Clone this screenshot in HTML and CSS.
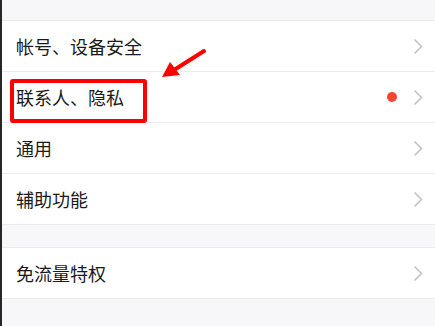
FILE: index.html
```html
<!DOCTYPE html>
<html lang="zh-CN">
<head>
    <meta charset="UTF-8">
    <meta name="viewport" content="width=device-width, initial-scale=1.0">
    <title>设置</title>
    <link rel="stylesheet" href="styles.css">
</head>
<body>
<div class="page">
    <div class="group first">
        <div class="row">
            <span class="label">帐号、设备安全</span>
            <svg class="chevron" width="10" height="17" viewBox="0 0 10 17"><polyline points="1.5,1.5 8.5,8.5 1.5,15.5"/></svg>
        </div>
        <div class="row">
            <span class="label">联系人、隐私</span>
            <span class="dot"></span>
            <svg class="chevron" width="10" height="17" viewBox="0 0 10 17"><polyline points="1.5,1.5 8.5,8.5 1.5,15.5"/></svg>
        </div>
        <div class="row">
            <span class="label">通用</span>
            <svg class="chevron" width="10" height="17" viewBox="0 0 10 17"><polyline points="1.5,1.5 8.5,8.5 1.5,15.5"/></svg>
        </div>
        <div class="row">
            <span class="label">辅助功能</span>
            <svg class="chevron" width="10" height="17" viewBox="0 0 10 17"><polyline points="1.5,1.5 8.5,8.5 1.5,15.5"/></svg>
        </div>
    </div>
    <div class="group">
        <div class="row">
            <span class="label">免流量特权</span>
            <svg class="chevron" width="10" height="17" viewBox="0 0 10 17"><polyline points="1.5,1.5 8.5,8.5 1.5,15.5"/></svg>
        </div>
    </div>

    <!-- 标注 -->
    <div class="mark-box"></div>
    <svg class="mark-arrow" width="50" height="34" viewBox="0 0 50 34">
        <line x1="46" y1="3" x2="16" y2="22" stroke="#f00" stroke-width="4" stroke-linecap="round"/>
        <polygon points="4,29 12,14 22,27" fill="#f00"/>
    </svg>
</div>
</body>
</html>
```

FILE: styles.css
```css
body {
    margin: 0;
    padding: 0;
    background-color: #f7f7f9;
    font-family: "Noto Sans CJK SC", "Noto Sans", sans-serif;
}
.page {
    position: relative;
    height: 326px;
    border-left: 2px solid #262626;
    padding-top: 20px;
    box-sizing: border-box;
    overflow: hidden;
}
.group {
    background-color: #fff;
    border-top: 1px solid #ececec;
    margin-top: 22px;
}
.group.first {
    margin-top: 0;
}
.row {
    display: flex;
    align-items: center;
    height: 50px;
    padding: 0 12px 0 14px;
    border-bottom: 1px solid #ececec;
}
.label {
    flex: 1;
    font-size: 18px;
    color: #1a1a1a;
}
.dot {
    width: 10px;
    height: 10px;
    border-radius: 50%;
    background-color: #f4472e;
    margin-right: 16px;
}
.chevron {
    display: block;
    fill: none;
    stroke: #c3c3c3;
    stroke-width: 1.6;
}
.mark-box {
    position: absolute;
    left: 8px;
    top: 79px;
    width: 129px;
    height: 36px;
    border: 4px solid #f00;
    border-radius: 3px;
}
.mark-arrow {
    position: absolute;
    left: 156px;
    top: 48px;
}
```
